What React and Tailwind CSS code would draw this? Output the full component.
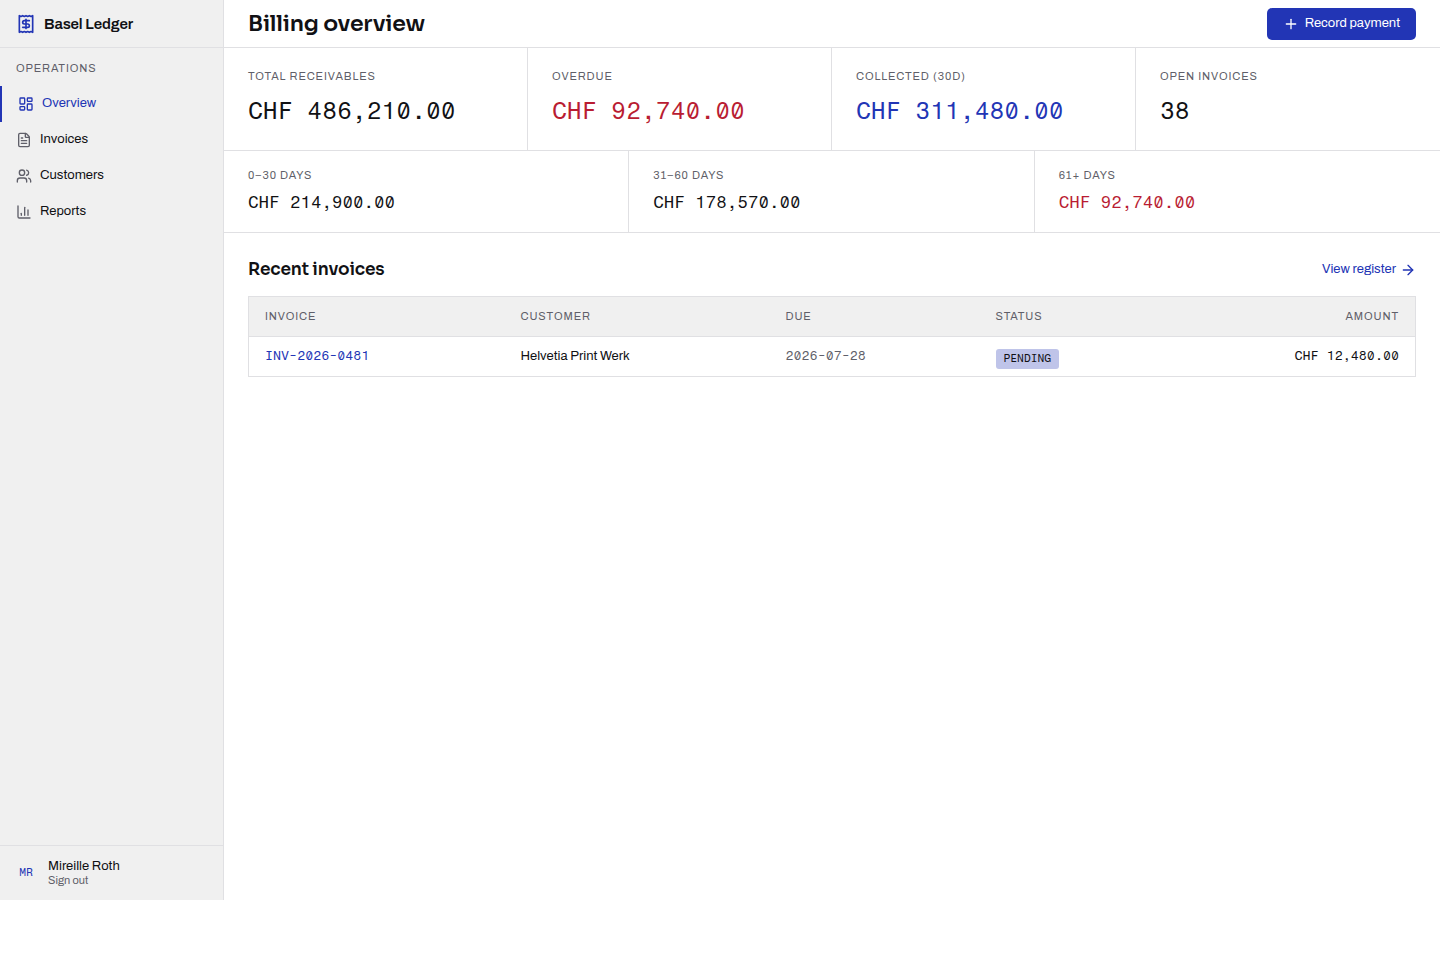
import { ArrowRight, FileText, LayoutDashboard, Plus, Users } from "lucide-react";

const sans = "font-['Archivo','Liberation_Sans',sans-serif]";
const mono = "font-['Fragment_Mono','Liberation_Mono',monospace]";
const display = "font-['Sora','Inter',sans-serif] font-semibold tracking-[-0.01em]";
const label = "text-[11px] leading-4 tracking-[0.08em] uppercase text-[#5f5f69]";

function ReceiptLogo() {
  return (
    <svg
      viewBox="0 0 24 24"
      className="size-5 shrink-0"
      fill="none"
      stroke="currentColor"
      strokeWidth="2"
      strokeLinecap="round"
      strokeLinejoin="round"
      aria-hidden="true"
    >
      <path d="M4 2v20l2-1 2 1 2-1 2 1 2-1 2 1 2-1 2 1V2l-2 1-2-1-2 1-2-1-2 1-2-1-2 1Z" />
      <path d="M16 8h-6a2 2 0 1 0 0 4h4a2 2 0 1 1 0 4H8" />
      <path d="M12 17.5v-11" />
    </svg>
  );
}

function ReportsIcon({ className }) {
  return (
    <svg
      viewBox="0 0 24 24"
      className={className}
      fill="none"
      stroke="currentColor"
      strokeWidth="2"
      strokeLinecap="round"
      strokeLinejoin="round"
      aria-hidden="true"
    >
      <path d="M3 3v16a2 2 0 0 0 2 2h16" />
      <path d="M18 17V9" />
      <path d="M13 17V5" />
      <path d="M8 17v-3" />
    </svg>
  );
}

const nav = [
  { name: "Overview", Icon: LayoutDashboard, active: true },
  { name: "Invoices", Icon: FileText },
  { name: "Customers", Icon: Users },
  { name: "Reports", Icon: ReportsIcon },
];

const stats = [
  { name: "Total receivables", value: "CHF 486,210.00", color: "text-[#111114]" },
  { name: "Overdue", value: "CHF 92,740.00", color: "text-[#b91c32]" },
  { name: "Collected (30d)", value: "CHF 311,480.00", color: "text-[#2235b5]" },
  { name: "Open invoices", value: "38", color: "text-[#111114]" },
];

const aging = [
  { name: "0–30 days", value: "CHF 214,900.00", color: "text-[#111114]" },
  { name: "31–60 days", value: "CHF 178,570.00", color: "text-[#111114]" },
  { name: "61+ days", value: "CHF 92,740.00", color: "text-[#b91c32]" },
];

const invoices = [
  {
    id: "INV-2026-0481",
    customer: "Helvetia Print Werk",
    due: "2026-07-28",
    status: "PENDING",
    amount: "CHF 12,480.00",
  },
];

function Sidebar() {
  return (
    <aside className="flex w-56 shrink-0 flex-col border-r border-[#e0e0e3] bg-[#f0f0f0]">
      <div className="flex h-12 items-center gap-2 border-b border-[#e0e0e3] px-4 text-[#2235b5]">
        <ReceiptLogo />
        <span className="text-[15px] leading-5 font-semibold tracking-[-0.01em] text-[#111114]">
          Basel Ledger
        </span>
      </div>
      <nav aria-label="Operations" className="pt-3">
        <p className={`px-4 pb-[10px] ${label}`}>Operations</p>
        {nav.map(({ name, Icon, active }) => (
          <a
            key={name}
            href="#"
            aria-current={active ? "page" : undefined}
            className={
              active
                ? "flex h-9 items-center gap-2 border-l-2 border-[#2235b5] px-4 text-[13px] text-[#2235b5]"
                : "flex h-9 items-center gap-2 px-4 text-[13px] text-[#111114]"
            }
          >
            <Icon className={active ? "size-4 shrink-0" : "size-4 shrink-0 text-[#5f5f69]"} />
            {name}
          </a>
        ))}
      </nav>
      <div className="mt-auto flex items-center gap-3 border-t border-[#e0e0e3] px-4 pt-3 pb-[13px]">
        <span className={`w-5 pt-[2px] text-center text-[11px] text-[#2235b5] ${mono}`}>MR</span>
        <div className="flex flex-col items-start">
          <span className="text-[13px] leading-4 text-[#111114]">Mireille Roth</span>
          <button type="button" className="text-[11px] leading-[13px] text-[#5f5f69]">
            Sign out
          </button>
        </div>
      </div>
    </aside>
  );
}

export default function App() {
  return (
    <div className={`flex min-h-[900px] bg-white text-[#111114] antialiased ${sans}`}>
      <Sidebar />
      <main className="min-w-0 flex-1">
        <header className="flex h-12 items-center justify-between border-b border-[#e0e0e3] px-6">
          <h1 className={`text-[22px] leading-8 ${display}`}>Billing overview</h1>
          <button
            type="button"
            className="flex h-8 items-center gap-[6px] rounded-[5px] bg-[#2235b5] px-4 text-[13px] text-white"
          >
            <Plus className="size-4" />
            Record payment
          </button>
        </header>

        <dl className="grid grid-cols-4 divide-x divide-[#e0e0e3] border-b border-[#e0e0e3]">
          {stats.map((s) => (
            <div key={s.name} className="px-6 py-5">
              <dt className={label}>{s.name}</dt>
              <dd className={`mt-2 text-[24px] leading-[38px] ${mono} ${s.color}`}>{s.value}</dd>
            </div>
          ))}
        </dl>

        <dl className="grid grid-cols-3 divide-x divide-[#e0e0e3] border-b border-[#e0e0e3]">
          {aging.map((s) => (
            <div key={s.name} className="px-6 py-4">
              <dt className={label}>{s.name}</dt>
              <dd className={`mt-[6px] text-[17px] leading-[27px] ${mono} ${s.color}`}>{s.value}</dd>
            </div>
          ))}
        </dl>

        <section className="p-6">
          <div className="flex items-center justify-between pb-[13px]">
            <h2 className={`text-[17px] leading-[26px] ${display}`}>Recent invoices</h2>
            <a href="#" className="flex items-center gap-1 text-[13px] text-[#2235b5]">
              View register
              <ArrowRight className="size-4" />
            </a>
          </div>
          <table className="w-full table-fixed border-collapse border border-[#e0e0e3] text-left text-[13px] leading-5">
            <thead>
              <tr className="h-10 border-b border-[#e0e0e3] bg-[#f0f0f0]">
                <th scope="col" className={`w-64 px-4 pb-[2px] font-normal ${label}`}>Invoice</th>
                <th scope="col" className={`w-[265px] px-4 pb-[2px] font-normal ${label}`}>Customer</th>
                <th scope="col" className={`w-[210px] px-4 pb-[2px] font-normal ${label}`}>Due</th>
                <th scope="col" className={`px-4 pb-[2px] font-normal ${label}`}>Status</th>
                <th scope="col" className={`px-4 pb-[2px] text-right font-normal ${label}`}>Amount</th>
              </tr>
            </thead>
            <tbody>
              {invoices.map((row) => (
                <tr key={row.id} className="h-10">
                  <td className={`px-4 pb-[2px] ${mono}`}>
                    <a href="#" className="text-[#2235b5]">{row.id}</a>
                  </td>
                  <td className="px-4 pb-[2px]">{row.customer}</td>
                  <td className={`px-4 pb-[2px] text-[#5f5f69] ${mono}`}>{row.due}</td>
                  <td className="px-4 pt-3 pb-[7px]">
                    <span
                      className={`block w-fit rounded-[3px] bg-[#bfc4e9] px-2 text-[11px] leading-5 ${mono}`}
                    >
                      {row.status}
                    </span>
                  </td>
                  <td className={`px-4 pb-[2px] text-right ${mono}`}>{row.amount}</td>
                </tr>
              ))}
            </tbody>
          </table>
        </section>
      </main>
    </div>
  );
}
